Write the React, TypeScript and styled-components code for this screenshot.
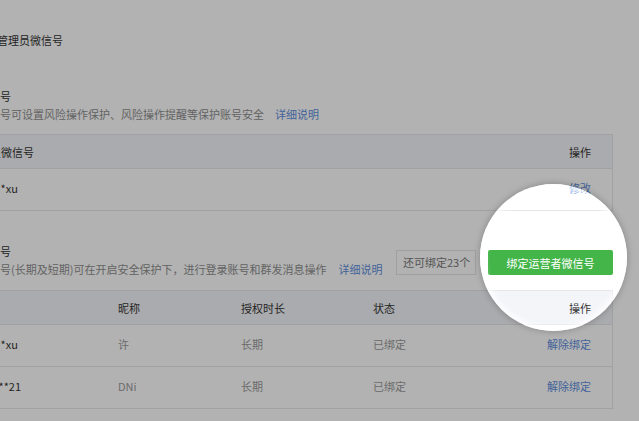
import React from "react";
import styled, { createGlobalStyle } from "styled-components";

const GlobalStyle = createGlobalStyle`
  html, body {
    margin: 0;
    padding: 0;
    background: #fff;
  }
  body {
    font-family: "Noto Sans CJK SC", "Noto Sans", sans-serif;
    font-size: 11px;
    color: #353535;
  }
`;

const Viewport = styled.div`
  position: relative;
  width: 639px;
  height: 421px;
  overflow: hidden;
  background: #fff;
`;

const Page = styled.div`
  width: 668px;
  margin-left: -55px;
  padding-top: 31px;
`;

const Crumb = styled.div`
  padding-left: 52px;
  line-height: 18px;
  color: #353535;
`;

const Section = styled.section<{ $top: number }>`
  margin-top: ${(p) => p.$top}px;
`;

const SectionHead = styled.div<{ $gap: number }>`
  display: flex;
  justify-content: space-between;
  margin-bottom: ${(p) => p.$gap}px;
`;

const Title = styled.h3`
  margin: 0;
  font-size: 11px;
  font-weight: normal;
  line-height: 18px;
  color: #353535;
`;

const Desc = styled.p`
  margin: 0;
  line-height: 18px;
  color: #8f8f8f;
`;

const Link = styled.a<{ $gap?: number }>`
  color: #5f8fdc;
  text-decoration: none;
  margin-left: ${(p) => p.$gap ?? 0}px;
`;

const Actions = styled.div`
  display: flex;
  align-items: center;
  gap: 12px;
  align-self: flex-end;
  margin-bottom: 3px;
`;

const Quota = styled.div`
  box-sizing: border-box;
  width: 80px;
  height: 25px;
  line-height: 23px;
  padding: 0 6px;
  border: 1px solid #e4e4e8;
  color: #7a7a7a;
  white-space: nowrap;
  overflow: hidden;
`;

const GreenButton = styled.button`
  box-sizing: border-box;
  width: 125px;
  height: 25px;
  border: 0;
  border-radius: 2px;
  background: #44b549;
  color: #fff;
  font-family: inherit;
  font-size: 11px;
  padding: 0;
`;

const Table = styled.div`
  border: 1px solid #e7e7eb;
  border-top: 0;
`;

const Row = styled.div<{ $cols: string; $head?: boolean }>`
  box-sizing: border-box;
  display: grid;
  grid-template-columns: ${(p) => p.$cols};
  align-items: center;
  height: ${(p) => (p.$head ? 34 : 42)}px;
  padding-bottom: ${(p) => (p.$head ? 0 : 4)}px;
  border-top: 1px solid #e7e7eb;
  background: ${(p) => (p.$head ? "#f4f5f9" : "#fff")};
`;

const Cell = styled.div<{ $right?: boolean; $tone?: "dark" | "light"; $lead?: number }>`
  padding: 0 21px 0 ${(p) => p.$lead ?? 22}px;
  white-space: nowrap;
  text-align: ${(p) => (p.$right ? "right" : "left")};
  color: ${(p) => (p.$tone === "light" ? "#9a9a9a" : "#353535")};
`;

const Spotlight = styled.div`
  position: absolute;
  left: 480px;
  top: 184px;
  width: 147px;
  height: 147px;
  border-radius: 50%;
  pointer-events: none;
  box-shadow: 0 0 0 1200px rgba(0, 0, 0, 0.3), 0 0 6px 1px rgba(0, 0, 0, 0.2),
    inset 0 0 6px 3px rgba(255, 255, 255, 0.95);
`;

const adminCols = "1fr auto";
const operatorCols = "150px 123px 132px 1fr auto";

const operators = [
  { id: "wang**xu", nick: "许", term: "长期", state: "已绑定" },
  { id: "zheng**21", nick: "DNi", term: "长期", state: "已绑定" },
];

export default function App() {
  return (
    <Viewport>
      <GlobalStyle />
      <Page>
        <Crumb>管理员微信号</Crumb>

        <Section $top={38}>
          <SectionHead $gap={11}>
            <div>
              <Title>管理员微信号</Title>
              <Desc>
                管理员微信号可设置风险操作保护、风险操作提醒等保护账号安全
                <Link $gap={11}>详细说明</Link>
              </Desc>
            </div>
          </SectionHead>
          <Table>
            <Row $cols={adminCols} $head>
              <Cell>管理员微信号</Cell>
              <Cell $right>操作</Cell>
            </Row>
            <Row $cols={adminCols}>
              <Cell>wang**xu</Cell>
              <Cell $right>
                <Link>修改</Link>
              </Cell>
            </Row>
          </Table>
        </Section>

        <Section $top={31}>
          <SectionHead $gap={12}>
            <div>
              <Title>运营者微信号</Title>
              <Desc>
                运营者微信号(长期及短期)可在开启安全保护下，进行登录账号和群发消息操作
                <Link $gap={12}>详细说明</Link>
              </Desc>
            </div>
            <Actions>
              <Quota>还可绑定23个</Quota>
              <GreenButton>绑定运营者微信号</GreenButton>
            </Actions>
          </SectionHead>
          <Table>
            <Row $cols={operatorCols} $head>
              <Cell $lead={18}>微信号</Cell>
              <Cell>昵称</Cell>
              <Cell>授权时长</Cell>
              <Cell>状态</Cell>
              <Cell $right>操作</Cell>
            </Row>
            {operators.map((o) => (
              <Row $cols={operatorCols} key={o.id}>
                <Cell>{o.id}</Cell>
                <Cell $tone="light">{o.nick}</Cell>
                <Cell $tone="light">{o.term}</Cell>
                <Cell $tone="light">{o.state}</Cell>
                <Cell $right>
                  <Link>解除绑定</Link>
                </Cell>
              </Row>
            ))}
          </Table>
        </Section>
      </Page>
      <Spotlight />
    </Viewport>
  );
}
